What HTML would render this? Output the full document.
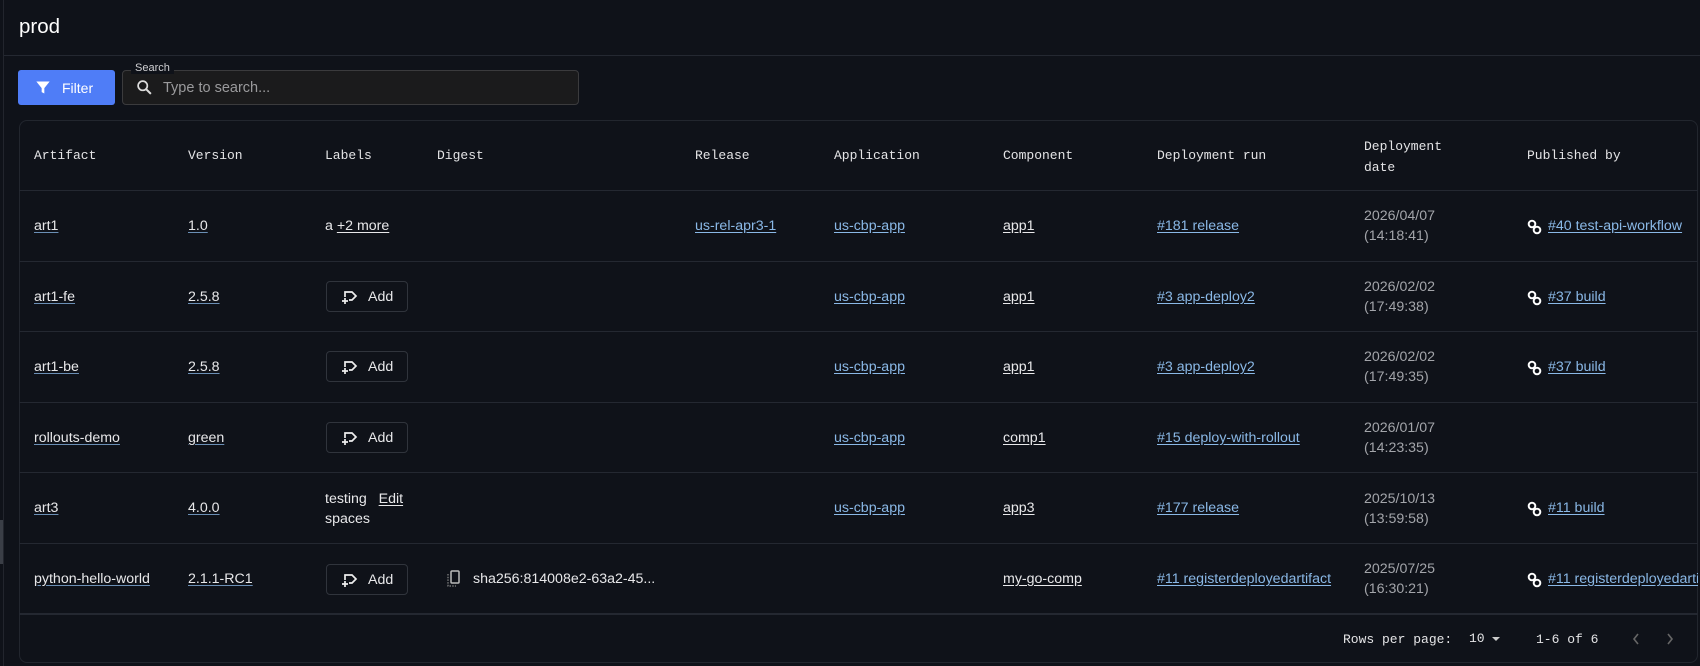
<!DOCTYPE html>
<html><head><meta charset="utf-8"><style>
*{box-sizing:border-box;margin:0;padding:0}
body{width:1700px;height:666px;background:#0f1219;color:#e8e8ea;font-family:"Liberation Sans",sans-serif;position:relative;overflow:hidden}
.a{position:absolute;white-space:nowrap}
.h{font-family:"Liberation Mono",monospace;font-size:13px;color:#e4e4e6}
.t{font-size:14.2px}
.u{text-decoration:underline;text-decoration-color:#6b8fb5;text-underline-offset:2px}
.l{color:#8ab8e6;text-decoration:underline;text-underline-offset:2px}
.w{text-decoration:underline;text-underline-offset:2px}
.d{color:#a3a5aa;font-size:14.2px;line-height:20px}
.line{position:absolute;left:19px;width:1679px;height:1px;background:#242831}
.add{position:absolute;left:326px;width:82px;height:31px;border:1px solid #30343c;border-radius:4px;font-size:14.2px}
.add span{position:absolute;left:41px;top:7px}
.add svg{position:absolute;left:14px;top:7px}
</style></head><body>
<div class="a" style="left:0;top:0;width:4px;height:666px;border-right:1px solid #22252d"></div>
<div class="a" style="left:0;top:520px;width:3px;height:44px;background:#3a3e46"></div>
<div class="a" style="left:19px;top:15px;font-size:20.5px;color:#fff">prod</div>
<div class="a" style="left:4px;top:55px;width:1696px;height:1px;background:#242831"></div>
<div class="a" style="left:18px;top:70px;width:97px;height:35px;background:#4f7df7;border-radius:3px;color:#fff;font-size:14px">
<svg style="position:absolute;left:17px;top:9px" width="16" height="17" viewBox="0 0 24 24"><path d="M2 3h20l-8 10v8l-4-2v-6z" fill="#fff"/></svg>
<span style="position:absolute;left:44px;top:10px">Filter</span></div>
<div class="a" style="left:122px;top:70px;width:457px;height:35px;background:#1b1b1c;border:1px solid #3b3b3d;border-radius:4px"></div>
<div class="a" style="left:131px;top:62px;padding:0 4px;background:#0f1219;font-size:11px;color:#cfcfd2">Search</div>
<svg class="a" style="left:136px;top:79px" width="17" height="17" viewBox="0 0 24 24"><circle cx="9.5" cy="9.5" r="6.5" stroke="#ddd" stroke-width="2.4" fill="none"/><path d="M14.5 14.5l6.5 6.5" stroke="#ddd" stroke-width="2.8"/></svg>
<div class="a" style="left:163px;top:80px;font-size:14.5px;color:#9a9a9c">Type to search...</div>

<div class="a" style="left:19px;top:120px;width:1679px;height:543px;border:1px solid #22262e;border-radius:8px"></div>

<div class="a h" style="left:34px;top:148px">Artifact</div>
<div class="a h" style="left:188px;top:148px">Version</div>
<div class="a h" style="left:325px;top:148px">Labels</div>
<div class="a h" style="left:437px;top:148px">Digest</div>
<div class="a h" style="left:695px;top:148px">Release</div>
<div class="a h" style="left:834px;top:148px">Application</div>
<div class="a h" style="left:1003px;top:148px">Component</div>
<div class="a h" style="left:1157px;top:148px">Deployment run</div>
<div class="a h" style="left:1364px;top:136px;line-height:21px">Deployment<br>date</div>
<div class="a h" style="left:1527px;top:148px">Published by</div>

<div class="line" style="top:190px"></div>
<div class="line" style="top:261px"></div>
<div class="line" style="top:331px"></div>
<div class="line" style="top:402px"></div>
<div class="line" style="top:472px"></div>
<div class="line" style="top:543px"></div>
<div class="line" style="top:613px;height:2px"></div>

<!-- row1 -->
<div class="a t u" style="left:34px;top:218px">art1</div>
<div class="a t u" style="left:188px;top:218px">1.0</div>
<div class="a t" style="left:325px;top:218px">a <span class="w">+2 more</span></div>
<div class="a t l" style="left:695px;top:218px">us-rel-apr3-1</div>
<div class="a t l" style="left:834px;top:218px">us-cbp-app</div>
<div class="a t w" style="left:1003px;top:218px">app1</div>
<div class="a t l" style="left:1157px;top:218px">#181 release</div>
<div class="a d" style="left:1364px;top:206px">2026/04/07<br>(14:18:41)</div>

<!-- row2 -->
<div class="a t u" style="left:34px;top:289px">art1-fe</div>
<div class="a t u" style="left:188px;top:289px">2.5.8</div>
<div class="a t l" style="left:834px;top:289px">us-cbp-app</div>
<div class="a t w" style="left:1003px;top:289px">app1</div>
<div class="a t l" style="left:1157px;top:289px">#3 app-deploy2</div>
<div class="a d" style="left:1364px;top:277px">2026/02/02<br>(17:49:38)</div>

<!-- row3 -->
<div class="a t u" style="left:34px;top:359px">art1-be</div>
<div class="a t u" style="left:188px;top:359px">2.5.8</div>
<div class="a t l" style="left:834px;top:359px">us-cbp-app</div>
<div class="a t w" style="left:1003px;top:359px">app1</div>
<div class="a t l" style="left:1157px;top:359px">#3 app-deploy2</div>
<div class="a d" style="left:1364px;top:347px">2026/02/02<br>(17:49:35)</div>

<!-- row4 -->
<div class="a t u" style="left:34px;top:430px">rollouts-demo</div>
<div class="a t u" style="left:188px;top:430px">green</div>
<div class="a t l" style="left:834px;top:430px">us-cbp-app</div>
<div class="a t w" style="left:1003px;top:430px">comp1</div>
<div class="a t l" style="left:1157px;top:430px">#15 deploy-with-rollout</div>
<div class="a d" style="left:1364px;top:418px">2026/01/07<br>(14:23:35)</div>

<!-- row5 -->
<div class="a t u" style="left:34px;top:500px">art3</div>
<div class="a t u" style="left:188px;top:500px">4.0.0</div>
<div class="a t" style="left:325px;top:489px;line-height:20px">testing &nbsp;&nbsp;<span class="w">Edit</span><br>spaces</div>
<div class="a t l" style="left:834px;top:500px">us-cbp-app</div>
<div class="a t w" style="left:1003px;top:500px">app3</div>
<div class="a t l" style="left:1157px;top:500px">#177 release</div>
<div class="a d" style="left:1364px;top:489px">2025/10/13<br>(13:59:58)</div>

<!-- row6 -->
<div class="a t u" style="left:34px;top:571px">python-hello-world</div>
<div class="a t u" style="left:188px;top:571px">2.1.1-RC1</div>
<svg class="a" style="left:446px;top:570px" width="15" height="18" viewBox="0 0 15 18"><rect x="5" y="1" width="8" height="12" rx="1" stroke="#bbb" stroke-width="1.5" fill="none"/><path d="M2 4v12h8" stroke="#888" stroke-width="1.2" stroke-dasharray="1.5 1.2" fill="none"/></svg>
<div class="a t" style="left:473px;top:571px">sha256:814008e2-63a2-45...</div>
<div class="a t w" style="left:1003px;top:571px">my-go-comp</div>
<div class="a t l" style="left:1157px;top:571px">#11 registerdeployedartifact</div>
<div class="a d" style="left:1364px;top:559px">2025/07/25<br>(16:30:21)</div>

<!-- add buttons -->
<div class="add" style="top:281px"><svg width="18" height="16" viewBox="0 0 18 16"><path d="M4 8V3h7l4 4-4 4H8" stroke="#eee" stroke-width="1.7" fill="none"/><path d="M1 12h6M4 9v6" stroke="#eee" stroke-width="1.7"/></svg><span>Add</span></div>
<div class="add" style="top:351px"><svg width="18" height="16" viewBox="0 0 18 16"><path d="M4 8V3h7l4 4-4 4H8" stroke="#eee" stroke-width="1.7" fill="none"/><path d="M1 12h6M4 9v6" stroke="#eee" stroke-width="1.7"/></svg><span>Add</span></div>
<div class="add" style="top:422px"><svg width="18" height="16" viewBox="0 0 18 16"><path d="M4 8V3h7l4 4-4 4H8" stroke="#eee" stroke-width="1.7" fill="none"/><path d="M1 12h6M4 9v6" stroke="#eee" stroke-width="1.7"/></svg><span>Add</span></div>
<div class="add" style="top:564px"><svg width="18" height="16" viewBox="0 0 18 16"><path d="M4 8V3h7l4 4-4 4H8" stroke="#eee" stroke-width="1.7" fill="none"/><path d="M1 12h6M4 9v6" stroke="#eee" stroke-width="1.7"/></svg><span>Add</span></div>

<!-- published by -->
<svg class="a" style="left:1527px;top:219px" width="15" height="16" viewBox="0 0 15 16"><circle cx="5" cy="5" r="3.3" stroke="#fff" stroke-width="2" fill="none"/><circle cx="10" cy="11" r="3.3" stroke="#fff" stroke-width="2" fill="none"/></svg>
<div class="a t l" style="left:1548px;top:218px">#40 test-api-workflow</div>
<svg class="a" style="left:1527px;top:290px" width="15" height="16" viewBox="0 0 15 16"><circle cx="5" cy="5" r="3.3" stroke="#fff" stroke-width="2" fill="none"/><circle cx="10" cy="11" r="3.3" stroke="#fff" stroke-width="2" fill="none"/></svg>
<div class="a t l" style="left:1548px;top:289px">#37 build</div>
<svg class="a" style="left:1527px;top:360px" width="15" height="16" viewBox="0 0 15 16"><circle cx="5" cy="5" r="3.3" stroke="#fff" stroke-width="2" fill="none"/><circle cx="10" cy="11" r="3.3" stroke="#fff" stroke-width="2" fill="none"/></svg>
<div class="a t l" style="left:1548px;top:359px">#37 build</div>
<svg class="a" style="left:1527px;top:501px" width="15" height="16" viewBox="0 0 15 16"><circle cx="5" cy="5" r="3.3" stroke="#fff" stroke-width="2" fill="none"/><circle cx="10" cy="11" r="3.3" stroke="#fff" stroke-width="2" fill="none"/></svg>
<div class="a t l" style="left:1548px;top:500px">#11 build</div>
<svg class="a" style="left:1527px;top:572px" width="15" height="16" viewBox="0 0 15 16"><circle cx="5" cy="5" r="3.3" stroke="#fff" stroke-width="2" fill="none"/><circle cx="10" cy="11" r="3.3" stroke="#fff" stroke-width="2" fill="none"/></svg>
<div class="a t l" style="left:1548px;top:571px;width:150px;overflow:hidden">#11 registerdeployedartifact</div>

<!-- pagination -->
<div class="a h" style="left:1343px;top:632px">Rows per page:</div>
<div class="a h" style="left:1469px;top:631px">10</div>
<svg class="a" style="left:1491px;top:636px" width="10" height="6" viewBox="0 0 10 6"><path d="M1 1h8L5 5z" fill="#ccc"/></svg>
<div class="a h" style="left:1536px;top:632px">1-6 of 6</div>
<svg class="a" style="left:1631px;top:632px" width="10" height="14" viewBox="0 0 10 14"><path d="M7 2L3 7l4 5" stroke="#666" stroke-width="1.6" fill="none"/></svg>
<svg class="a" style="left:1665px;top:632px" width="10" height="14" viewBox="0 0 10 14"><path d="M3 2l4 5-4 5" stroke="#666" stroke-width="1.6" fill="none"/></svg>
</body></html>
